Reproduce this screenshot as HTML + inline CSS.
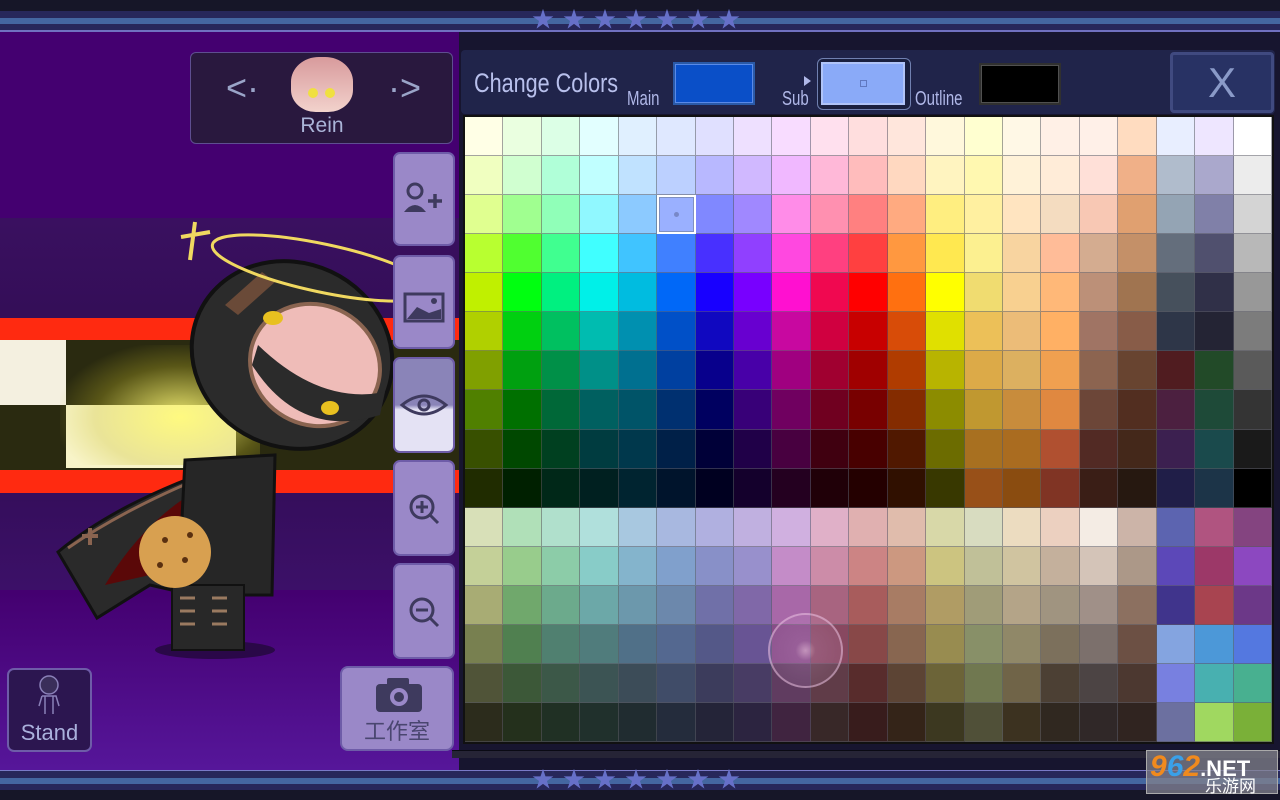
<!DOCTYPE html>
<html><head><meta charset="utf-8">
<style>
*{margin:0;padding:0;box-sizing:border-box}
body{width:1280px;height:800px;overflow:hidden;background:#161628;font-family:"Liberation Sans","Noto Sans CJK SC",sans-serif;position:relative}
.abs{position:absolute}
#left{left:0;top:32px;width:459px;height:738px;background:linear-gradient(#440070 0,#440070 560px,#56169a 738px)}
#right{left:459px;top:32px;width:821px;height:738px;background:#17152f}
.bar{left:0;width:1280px}
.btn{position:absolute;left:393px;width:62px;background:#9a88c8;border:2px solid #6e5ca8;border-radius:7px}
#grid{position:absolute;left:465px;top:117px;width:807px;height:625px;display:grid;grid-template-columns:repeat(21,1fr);grid-template-rows:repeat(16,1fr);background:#1a1a2a}
#grid div{border-right:1px solid rgba(90,90,100,.55);border-bottom:1px solid rgba(90,90,100,.55)}
.stars{color:#6670c8;font-size:22px;letter-spacing:9px;line-height:24px}
</style></head><body>
<div class="abs bar" style="top:0;height:32px;background:#161628"></div>
<div class="abs bar" style="top:11px;height:20px;background:#27275a"></div>
<div class="abs bar" style="top:18px;height:6px;background:#4466a0"></div>
<div class="abs bar" style="top:30px;height:2px;background:#7070c0"></div>
<div class="abs stars" style="left:532px;top:8px">★★★★★★★</div>

<div id="left" class="abs"></div>
<div id="right" class="abs"></div>

<div class="abs" style="left:0;top:218px;width:459px;height:372px;background:linear-gradient(#3a1060,#2e0c50 50%,#3c1068)"></div>
<div class="abs" style="left:0;top:318px;width:459px;height:22px;background:#ff2a10"></div>
<div class="abs" style="left:0;top:340px;width:459px;height:130px;background:#2a2a10"></div>
<div class="abs" style="left:0;top:340px;width:66px;height:65px;background:#f4f0e0"></div>
<div class="abs" style="left:66px;top:405px;width:170px;height:63px;background:#f8f4c8"></div>
<div class="abs" style="left:60px;top:345px;width:200px;height:120px;background:radial-gradient(ellipse at 60% 60%,rgba(255,250,120,.9),rgba(200,190,40,.3) 50%,rgba(0,0,0,0) 75%)"></div>
<div class="abs" style="left:0;top:470px;width:459px;height:23px;background:#ff2a10"></div>

<svg class="abs" style="left:0;top:200px" width="459" height="480" viewBox="0 200 459 480">
<ellipse cx="215" cy="650" rx="60" ry="9" fill="#2a0848"/>
<path d="M58 552 Q120 500 235 462 L262 470 L250 560 L215 600 L150 585 L97 618 Z" fill="#2a2a2a" stroke="#111" stroke-width="3"/>
<path d="M105 585 Q150 510 220 478 L240 490 L220 580 L150 575 Z" fill="#5a0808"/>
<path d="M68 548 Q130 505 225 468" fill="none" stroke="#8a6450" stroke-width="3"/>
<path d="M185 460 L275 455 L272 595 L178 595 Z" fill="#262626" stroke="#111" stroke-width="3"/>
<rect x="172" y="585" width="72" height="65" fill="#282828" stroke="#111" stroke-width="2"/>
<path d="M180 598 h15 M180 611 h15 M180 624 h15 M212 598 h15 M212 611 h15 M212 624 h15" stroke="#9a7a60" stroke-width="3"/>
<ellipse cx="292" cy="355" rx="102" ry="92" fill="#2b2b2b" stroke="#111" stroke-width="4" transform="rotate(25 292 355)"/>
<ellipse cx="315" cy="365" rx="66" ry="60" fill="#efbcb8" stroke="#8a6450" stroke-width="4" transform="rotate(25 315 365)"/>
<path d="M252 365 Q300 440 380 415 L385 392 Q320 405 258 345 Z" fill="#2b2b2b"/>
<ellipse cx="273" cy="318" rx="10" ry="7" fill="#e8c020"/>
<ellipse cx="330" cy="408" rx="9" ry="7" fill="#e8c020"/>
<path d="M225 305 L262 272 L275 282 L238 315 Z" fill="#6a4a38"/>
<circle cx="175" cy="552" r="36" fill="#d8a050"/>
<circle cx="165" cy="540" r="3" fill="#5a3010"/><circle cx="185" cy="560" r="3" fill="#5a3010"/><circle cx="160" cy="565" r="3" fill="#5a3010"/><circle cx="190" cy="535" r="3" fill="#5a3010"/>
<path d="M82 536 L98 536 M90 528 L90 545" stroke="#8a6450" stroke-width="4"/>
<ellipse cx="322" cy="268" rx="112" ry="24" fill="none" stroke="#f0d860" stroke-width="3" transform="rotate(12 322 268)"/>
<path d="M181 237 L210 232 M195 222 L190 260" stroke="#f0d860" stroke-width="4"/>
</svg>

<div class="abs" style="left:190px;top:52px;width:263px;height:92px;background:#29183e;border:1px solid #5e4e90;border-radius:6px"></div>
<div class="abs" style="left:226px;top:66px;color:#9aa4c8;font-size:36px;line-height:44px">&lt;·</div>
<div class="abs" style="left:388px;top:66px;color:#9aa4c8;font-size:36px;line-height:44px">·&gt;</div>
<div class="abs" style="left:291px;top:57px;width:62px;height:55px;border-radius:45% 45% 40% 40%;background:linear-gradient(#d89a9c,#f2d2cc)"></div>
<div class="abs" style="left:308px;top:88px;width:10px;height:10px;border-radius:50%;background:#f0e040"></div>
<div class="abs" style="left:325px;top:88px;width:10px;height:10px;border-radius:50%;background:#f0e040"></div>
<div class="abs" style="left:290px;top:114px;width:64px;text-align:center;color:#aab4d8;font-size:21px">Rein</div>

<div class="btn" style="top:152px;height:94px"><svg width="58" height="90"><circle cx="20" cy="37" r="7" fill="none" stroke="#3e3a5e" stroke-width="3"/><path d="M9 58 Q20 44 31 58 Z" fill="#3e3a5e"/><path d="M33 47 h14 M40 40 v14" stroke="#3e3a5e" stroke-width="3.5"/></svg></div>
<div class="btn" style="top:255px;height:94px"><svg width="58" height="90"><rect x="10" y="37" width="38" height="27" fill="none" stroke="#3e3a5e" stroke-width="3"/><path d="M12 62 L22 50 L34 56 L46 52 L46 62 Z" fill="#3e3a5e"/><circle cx="39" cy="44" r="3" fill="#3e3a5e"/></svg></div>
<div class="btn" style="top:357px;height:96px;background:linear-gradient(#8a84b8 0,#8a84b8 50%,#e4e2f4 55%,#e4e2f4)"><svg width="58" height="90"><path d="M7 46 Q29 28 51 46 Q29 64 7 46 Z" fill="none" stroke="#3e3a5e" stroke-width="3"/><circle cx="29" cy="46" r="5" fill="none" stroke="#3e3a5e" stroke-width="3"/></svg></div>
<div class="btn" style="top:460px;height:96px"><svg width="58" height="90"><circle cx="27" cy="45" r="11" fill="none" stroke="#3e3a5e" stroke-width="3"/><path d="M35 53 L43 61 M21 45 h12 M27 39 v12" stroke="#3e3a5e" stroke-width="3"/></svg></div>
<div class="btn" style="top:563px;height:96px"><svg width="58" height="90"><circle cx="27" cy="45" r="11" fill="none" stroke="#3e3a5e" stroke-width="3"/><path d="M35 53 L43 61 M21 45 h12" stroke="#3e3a5e" stroke-width="3"/></svg></div>
<div class="abs" style="left:340px;top:666px;width:114px;height:85px;background:#9a88c8;border:2px solid #6e5ca8;border-radius:8px"><svg width="110" height="48" style="position:absolute;left:0;top:0"><rect x="34" y="16" width="46" height="28" rx="4" fill="#3e3a5e"/><rect x="45" y="10" width="22" height="8" rx="2" fill="#3e3a5e"/><circle cx="57" cy="29" r="9" fill="#9a88c8"/><circle cx="57" cy="29" r="5" fill="#3e3a5e"/></svg><div style="position:absolute;left:0;top:46px;width:110px;text-align:center;color:#4a4670;font-size:22px;font-family:'Noto Sans CJK SC',sans-serif">工作室</div></div>
<div class="abs" style="left:7px;top:668px;width:85px;height:84px;background:#2c1650;border:2px solid #6e5ca8;border-radius:7px"><svg width="81" height="50" style="position:absolute;left:0;top:0"><circle cx="40" cy="15" r="9" fill="#3a2e5a" stroke="#8a80b8" stroke-width="1.5"/><path d="M33 26 h14 l3 10 M33 26 l-3 10 M36 26 v18 M44 26 v18" stroke="#8a80b8" stroke-width="1.5" fill="none"/></svg><div style="position:absolute;left:0;top:50px;width:81px;text-align:center;color:#aab0dc;font-size:22px">Stand</div></div>

<div class="abs" style="left:461px;top:50px;width:814px;height:64px;background:#20244a;border-radius:4px"></div>
<div class="abs" style="left:474px;top:68px;color:#b8c0ec;font-size:27px;transform:scaleX(.8);transform-origin:left;white-space:nowrap">Change Colors</div>
<div class="abs" style="left:627px;top:88px;color:#b0b8e8;font-size:20px;transform:scaleX(.75);transform-origin:left">Main</div>
<div class="abs" style="left:673px;top:62px;width:82px;height:43px;background:#0a4fc8;border:2px solid #2a5aa8;box-shadow:inset 0 0 0 1px #5a8ae8"></div>
<div class="abs" style="left:804px;top:76px;width:0;height:0;border-left:7px solid #b0b8e8;border-top:5px solid transparent;border-bottom:5px solid transparent"></div>
<div class="abs" style="left:782px;top:88px;color:#b0b8e8;font-size:20px;transform:scaleX(.75);transform-origin:left">Sub</div>
<div class="abs" style="left:817px;top:58px;width:94px;height:52px;border:1.5px solid #7080b0;border-radius:6px;background:#1a2040"></div>
<div class="abs" style="left:821px;top:62px;width:84px;height:43px;background:#8aaaf8;border:2px solid #b0c4f8"></div>
<div class="abs" style="left:860px;top:80px;width:7px;height:7px;border:1px solid #6078c0"></div>
<div class="abs" style="left:915px;top:88px;color:#b0b8e8;font-size:20px;transform:scaleX(.75);transform-origin:left">Outline</div>
<div class="abs" style="left:979px;top:63px;width:82px;height:42px;background:#000;border:2px solid #303030;box-shadow:inset 0 0 0 1px #505050"></div>
<div class="abs" style="left:1170px;top:52px;width:104px;height:61px;background:#283264;border:3px solid #404a80;border-radius:4px;color:#8a9ac8;font-size:42px;text-align:center;line-height:56px">X</div>

<div class="abs" style="left:463px;top:115px;width:811px;height:629px;background:#111"></div>
<div id="grid"></div>
<div class="abs" style="left:768px;top:613px;width:75px;height:75px;border-radius:50%;border:2px solid rgba(240,200,230,.5);background:radial-gradient(circle,rgba(255,220,240,.5) 0,rgba(200,150,200,.25) 20%,rgba(200,150,200,.15) 70%)"></div>

<div class="abs" style="left:452px;top:750px;width:828px;height:8px;background:#262436;border-top:1px solid #0a0a14"></div>
<div class="abs bar" style="top:770px;height:30px;background:#161628"></div>
<div class="abs bar" style="top:770px;height:20px;background:#27275a;border-top:1px solid #7a7ac8"></div>
<div class="abs bar" style="top:778px;height:6px;background:#4466a0"></div>
<div class="abs stars" style="left:532px;top:768px">★★★★★★★</div>
<div class="abs" style="left:1146px;top:750px;width:132px;height:44px;background:rgba(130,130,140,.75);border:1px solid #aaa"></div>
<div class="abs" style="left:1150px;top:749px;font:italic bold 30px 'Liberation Sans',sans-serif;color:#f08a1e;line-height:36px">9<span style="color:#3aa0e8">6</span>2<span style="color:#fff;font-size:22px;font-style:normal">.NET</span></div>
<div class="abs" style="left:1205px;top:772px;color:#fff;font-size:17px;font-family:'Noto Sans CJK SC',sans-serif">乐游网</div>

<script>
var rows=[
"ffffe6 eaffe0 dcffe6 e2ffff e0f0ff dfe8ff e0e0ff eee0ff f8dcff ffe0ee ffdede ffe6dc fff8dc ffffd0 fff8e6 fff0e6 fff0e8 ffdcc0 e8eeff eee6ff ffffff",
"f0ffc0 d0ffd0 b0ffd8 c0ffff c0e2ff bcd0ff b8b8ff d0b8ff f0b8ff ffb8d8 ffbcbc ffd8c0 fff4c0 fff8b0 fff2d8 ffecd8 ffe0d8 f0b088 b0bccc aaa8cc ececec",
"e0ff90 a0ff90 90ffb8 90f8ff 8ccaff 9ab0ff 8088ff a088ff ff8ce8 ff90b0 ff8080 ffaa80 ffee80 fff0a0 ffe4c0 f4dcc0 f8c8b4 e0a070 94a4b4 8080a8 d4d4d4",
"b8ff30 50ff30 40ff90 40ffff 40c4ff 4080ff 4830ff 9040ff ff48e0 ff4080 ff4040 ff9840 ffe850 fcf090 f8d4a0 ffbc98 d4ac90 c49068 646e7c 50506e b8b8b8",
"c0f000 00ff10 00f080 00f0e8 00bce0 0068f8 1800ff 7800ff ff10d0 f00850 ff0000 ff7010 ffff00 f0dc70 f8d090 ffb878 bc9078 a07450 46505c 303048 989898",
"b0d000 00d010 00c060 00bcb0 0090b0 0050c8 1008c0 6800d0 c808a0 d00040 c80000 d84c08 e0e000 ecc058 ecbc78 ffb064 a07464 885c48 2e3648 242434 7c7c7c",
"80a000 00a010 009048 009088 007090 0040a0 08008c 4800a8 a00080 a00030 a00000 b03c00 b8b400 dcaa48 dcb060 f0a050 8c6450 684430 501c20 224a28 5a5a5a",
"508000 007000 006838 006060 005468 003070 000060 380078 700060 700020 780000 842c00 8c8c00 c09830 c88c3c e08840 6c4638 522e20 4c2040 1e4a38 343434",
"385000 004800 004020 003c40 00384c 002048 000038 200048 480040 400010 480000 501800 6c6c00 a87020 aa6c20 b05030 522a24 44281a 3c2050 1a4a4c 1a1a1a",
"202c00 002000 002818 002020 002430 00142c 000020 14002c 240020 200008 240000 301000 383800 985018 8a4c10 803424 3a1e16 261810 201e48 1c3448 000000",
"d8e0b8 b0e0b8 b0e0cc b0e0dc a8c8e0 a8b8e0 b0b0e0 c0b0e0 d0b0e0 e0b0c8 e0b0b0 e0bcac d8d8a8 d8dcc0 ecdcc0 ecd0c0 f4ece4 ccb4a8 5c64b0 b05480 844480",
"c4d098 98cc8c 8ccca8 88ccc8 84b4cc 80a0cc 8890c8 9890cc c48cc8 cc8ca8 cc8484 cc9880 ccc480 c0c098 d0c4a0 c4b09c d4c4b8 ac9888 5c48b8 9c3868 8c48c0",
"a8ac74 70a86c 6caa8c 6ca8a8 6c98ac 6c88ac 7070a8 8068a8 a868a8 a86480 a85c5c a87c64 b09c64 a09c78 b4a488 a09480 a09088 8c7060 40348c a84450 6c3888",
"788050 508050 508070 507c7c 507088 546890 545888 685494 884c88 884860 884848 886650 988c50 889068 908868 7c705c 7c706c 6c5044 84a4e0 4c98d8 5478e0",
"505438 3c5838 3c5848 3c5454 3c4c58 404c68 3c3c5c 483c64 603c60 603c48 582c2c 5c4434 6c6438 707850 706448 4c4034 4c4444 4c3830 7880e0 48b0b0 48b090",
"2c2c1c 24301c 203024 20302c 202c30 242c3c 242438 2c2440 402440 382828 381c1c 342418 3c3820 505038 3c3220 302820 302828 302420 6c70a0 a0d860 7ab038"];
var g=document.getElementById('grid'),h='';
rows.forEach(function(r,i){r.split(' ').forEach(function(c,j){
var s='background:#'+c;
if(i==2&&j==5)s+=';border:2px solid #fff;box-shadow:inset 0 0 0 1px #8090c0;display:flex;align-items:center;justify-content:center';
h+='<div style="'+s+'">'+(i==2&&j==5?'<span style="width:5px;height:5px;border-radius:50%;background:#7888c8"></span>':'')+'</div>';});});
g.innerHTML=h;
</script>
</body></html>
